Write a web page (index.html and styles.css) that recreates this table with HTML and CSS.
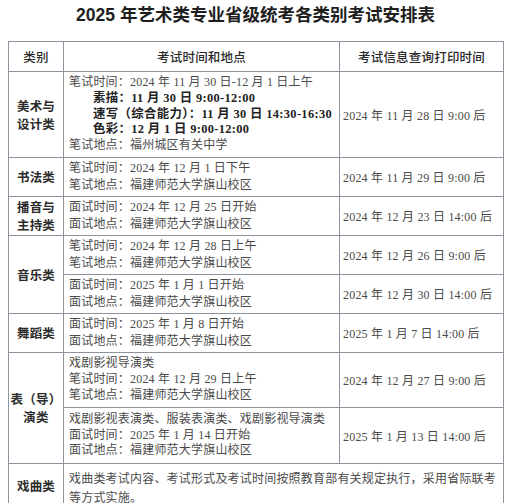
FILE: index.html
```html
<!DOCTYPE html>
<html lang="zh-CN">
<head>
<meta charset="utf-8">
<title>2025 年艺术类专业省级统考各类别考试安排表</title>
<link rel="stylesheet" href="styles.css">
</head>
<body>
<div class="page">
  <h1 class="title">2025 年艺术类专业省级统考各类别考试安排表</h1>
  <table class="sched">
    <colgroup>
      <col class="c1"><col class="c2"><col class="c3">
    </colgroup>
    <thead>
      <tr class="h-head">
        <th>类别</th>
        <th>考试时间和地点</th>
        <th>考试信息查询打印时间</th>
      </tr>
    </thead>
    <tbody>
      <tr class="h-art">
        <td class="cat">美术与<br>设计类</td>
        <td class="info tight">
          <div>笔试时间：2024 年 11 月 30 日-12 月 1 日上午</div>
          <div class="sub">素描：11 月 30 日 9:00-12:00</div>
          <div class="sub">速写（综合能力）：11 月 30 日 14:30-16:30</div>
          <div class="sub">色彩：12 月 1 日 9:00-12:00</div>
          <div>笔试地点：福州城区有关中学</div>
        </td>
        <td class="when">2024 年 11 月 28 日 9:00 后</td>
      </tr>
      <tr class="h-2">
        <td class="cat">书法类</td>
        <td class="info">
          <div>笔试时间：2024 年 12 月 1 日下午</div>
          <div>笔试地点：福建师范大学旗山校区</div>
        </td>
        <td class="when">2024 年 11 月 29 日 9:00 后</td>
      </tr>
      <tr class="h-2">
        <td class="cat">播音与<br>主持类</td>
        <td class="info">
          <div>面试时间：2024 年 12 月 25 日开始</div>
          <div>面试地点：福建师范大学旗山校区</div>
        </td>
        <td class="when">2024 年 12 月 23 日 14:00 后</td>
      </tr>
      <tr class="h-2">
        <td class="cat" rowspan="2">音乐类</td>
        <td class="info">
          <div>笔试时间：2024 年 12 月 28 日上午</div>
          <div>笔试地点：福建师范大学旗山校区</div>
        </td>
        <td class="when">2024 年 12 月 26 日 9:00 后</td>
      </tr>
      <tr class="h-2">
        <td class="info">
          <div>面试时间：2025 年 1 月 1 日开始</div>
          <div>面试地点：福建师范大学旗山校区</div>
        </td>
        <td class="when">2024 年 12 月 30 日 14:00 后</td>
      </tr>
      <tr class="h-2">
        <td class="cat">舞蹈类</td>
        <td class="info">
          <div>面试时间：2025 年 1 月 8 日开始</div>
          <div>面试地点：福建师范大学旗山校区</div>
        </td>
        <td class="when">2025 年 1 月 7 日 14:00 后</td>
      </tr>
      <tr class="h-3">
        <td class="cat" rowspan="2">表（导）<br>演类</td>
        <td class="info tight">
          <div>戏剧影视导演类</div>
          <div>笔试时间：2024 年 12 月 29 日上午</div>
          <div>笔试地点：福建师范大学旗山校区</div>
        </td>
        <td class="when">2024 年 12 月 27 日 9:00 后</td>
      </tr>
      <tr class="h-3b">
        <td class="info tight">
          <div>戏剧影视表演类、服装表演类、戏剧影视导演类</div>
          <div>面试时间：2025 年 1 月 14 日开始</div>
          <div>面试地点：福建师范大学旗山校区</div>
        </td>
        <td class="when">2025 年 1 月 13 日 14:00 后</td>
      </tr>
      <tr class="h-last">
        <td class="cat">戏曲类</td>
        <td class="info wide" colspan="2">
          <div>戏曲类考试内容、考试形式及考试时间按照教育部有关规定执行，采用省际联考等方式实施。</div>
        </td>
      </tr>
    </tbody>
  </table>
</div>
</body>
</html>
```

FILE: styles.css
```css
html, body {
  margin: 0;
  padding: 0;
  background: #ffffff;
}

.page {
  padding: 0 9px 0 8px;
  height: 503px;
  overflow: hidden;
}

.title {
  margin: 0;
  height: 41px;
  line-height: 30px;
  text-align: center;
  font-family: "Liberation Sans", "Noto Sans CJK SC", sans-serif;
  font-size: 17.5px;
  font-weight: 700;
  color: #1e1e1e;
}

.sched {
  width: 495px;
  table-layout: fixed;
  border-collapse: collapse;
  font-family: "Liberation Serif", "Noto Sans CJK SC", serif;
  font-size: 12px;
  letter-spacing: 0.2px;
  color: #4a4a4a;
}

.c1 { width: 55px; }
.c2 { width: 276px; }
.c3 { width: 164px; }

.sched th,
.sched td {
  border: 1px solid #8d949d;
  padding: 0;
  vertical-align: middle;
}

.sched th {
  font-family: "Noto Sans CJK SC", sans-serif;
  font-weight: 500;
  font-size: 12.5px;
  color: #2a2a2a;
  text-align: center;
}

.h-head { height: 30px; }
.h-art { height: 86px; }
.h-2 { height: 39px; }
.h-3 { height: 55px; }
.h-3b { height: 56px; }
.h-last { height: 44px; }

.cat {
  text-align: center;
  font-family: "Noto Sans CJK SC", sans-serif;
  font-weight: 700;
  font-size: 12.5px;
  line-height: 18px;
  color: #2b2b2b;
}

.info {
  padding: 0 2px 0 5px !important;
  line-height: 17px;
  white-space: nowrap;
}

.info.tight {
  line-height: 15.8px;
}

.info.wide {
  white-space: normal;
  line-height: 19px;
  vertical-align: top;
  padding-top: 6px !important;
}

.sub {
  padding-left: 24px;
  font-weight: 700;
  font-size: 12.4px;
  letter-spacing: 0.35px;
  color: #222;
}

.when {
  padding-left: 3px !important;
  white-space: nowrap;
}
```
